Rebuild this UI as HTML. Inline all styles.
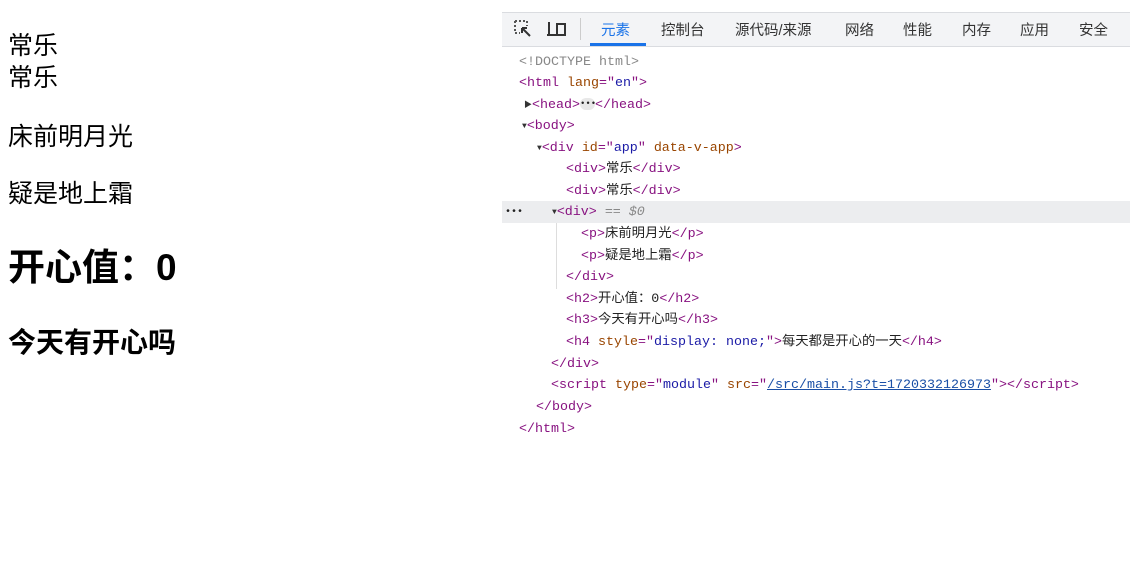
<!DOCTYPE html>
<html><head><meta charset="utf-8"><style>
body{margin:0;width:1130px;height:566px;background:#fff;position:relative;overflow:hidden;font-family:"Liberation Sans","Noto Sans CJK SC",sans-serif;}
.l{position:absolute;left:8px;color:#000;white-space:nowrap;line-height:1;}
#dev{position:absolute;left:502px;top:12px;width:628px;height:554px;}
#bar{position:absolute;left:0;top:0;width:628px;height:33px;background:#f3f4f6;border-top:1px solid #dadce0;border-bottom:1px solid #dadce0;}
.tab{position:absolute;top:6px;font-size:14.5px;color:#333;font-family:"Liberation Sans","Noto Sans CJK SC",sans-serif;}
.c{position:absolute;font-family:"Liberation Mono","Noto Sans CJK SC",monospace;font-size:13.33px;white-space:pre;line-height:16px;color:#222;}
.t{color:#881280}.a{color:#994500}.v{color:#1a1aa6}.g{color:#888}
.ar{font-size:8px;vertical-align:1px;color:#333}
</style></head><body>
<div class="l" style="top:34px;font-size:25px">常乐</div>
<div class="l" style="top:66px;font-size:25px">常乐</div>
<div class="l" style="top:125px;font-size:25px">床前明月光</div>
<div class="l" style="top:182px;font-size:25px">疑是地上霜</div>
<div class="l" style="top:249px;font-size:37px;font-weight:bold">开心值：0</div>
<div class="l" style="top:329px;font-size:28px;font-weight:bold">今天有开心吗</div>

<div id="dev">
<div id="bar">
 <svg style="position:absolute;left:11px;top:6px" width="20" height="20" viewBox="0 0 20 20"><path d="M2 2h12v5M2 2v12h5" fill="none" stroke="#555" stroke-width="2" stroke-dasharray="2 2"/><path d="M9 9l8 8M9 9h5M9 9v5" stroke="#333" stroke-width="2" fill="none"/></svg>
 <svg style="position:absolute;left:44px;top:6px" width="22" height="20" viewBox="0 0 22 20"><path d="M3 3v13h7M1 16h9" stroke="#333" stroke-width="2" fill="none"/><rect x="11" y="5" width="8" height="11" fill="none" stroke="#333" stroke-width="2"/></svg>
 <div style="position:absolute;left:78px;top:5px;width:1px;height:22px;background:#ccc"></div>
 <div class="tab" style="left:99px;color:#1a73e8">元素</div>
 <div style="position:absolute;left:88px;top:30px;width:56px;height:3px;background:#1a73e8"></div>
 <div class="tab" style="left:159px">控制台</div>
 <div class="tab" style="left:233px">源代码/来源</div>
 <div class="tab" style="left:343px">网络</div>
 <div class="tab" style="left:401px">性能</div>
 <div class="tab" style="left:460px">内存</div>
 <div class="tab" style="left:518px">应用</div>
 <div class="tab" style="left:577px">安全</div>
</div>
<div style="position:absolute;left:0;top:189px;width:628px;height:22px;background:#ecedef"></div>
<div style="position:absolute;left:54px;top:211px;width:1px;height:66px;background:#ddd"></div>
</div>

<div class="c g" style="left:519px;top:55px">&lt;!DOCTYPE html&gt;</div>
<div class="c" style="left:519px;top:76px"><span class="t">&lt;html</span> <span class="a">lang</span><span class="t">="</span><span class="v">en</span><span class="t">"&gt;</span></div>
<div class="c" style="left:524px;top:98px"><span class="ar">▶</span><span class="t">&lt;head&gt;</span><span style="display:inline-block;width:15px;height:12px;border-radius:6px;background:#e8e8e8;font-size:9px;line-height:12px;text-align:center;vertical-align:middle">•••</span><span class="t">&lt;/head&gt;</span></div>
<div class="c" style="left:522px;top:119px"><span class="ar">▼</span><span class="t">&lt;body&gt;</span></div>
<div class="c" style="left:537px;top:141px"><span class="ar">▼</span><span class="t">&lt;div</span> <span class="a">id</span><span class="t">="</span><span class="v">app</span><span class="t">"</span> <span class="a">data-v-app</span><span class="t">&gt;</span></div>
<div class="c" style="left:566px;top:162px"><span class="t">&lt;div&gt;</span>常乐<span class="t">&lt;/div&gt;</span></div>
<div class="c" style="left:566px;top:184px"><span class="t">&lt;div&gt;</span>常乐<span class="t">&lt;/div&gt;</span></div>
<div class="c" style="left:505px;top:205px;font-size:10px">•••</div>
<div class="c" style="left:552px;top:205px"><span class="ar">▼</span><span class="t">&lt;div&gt;</span> <i class="g">== $0</i></div>
<div class="c" style="left:581px;top:227px"><span class="t">&lt;p&gt;</span>床前明月光<span class="t">&lt;/p&gt;</span></div>
<div class="c" style="left:581px;top:249px"><span class="t">&lt;p&gt;</span>疑是地上霜<span class="t">&lt;/p&gt;</span></div>
<div class="c" style="left:566px;top:270px"><span class="t">&lt;/div&gt;</span></div>
<div class="c" style="left:566px;top:292px"><span class="t">&lt;h2&gt;</span>开心值：0<span class="t">&lt;/h2&gt;</span></div>
<div class="c" style="left:566px;top:313px"><span class="t">&lt;h3&gt;</span>今天有开心吗<span class="t">&lt;/h3&gt;</span></div>
<div class="c" style="left:566px;top:335px"><span class="t">&lt;h4</span> <span class="a">style</span><span class="t">="</span><span class="v">display: none;</span><span class="t">"&gt;</span>每天都是开心的一天<span class="t">&lt;/h4&gt;</span></div>
<div class="c" style="left:551px;top:357px"><span class="t">&lt;/div&gt;</span></div>
<div class="c" style="left:551px;top:378px"><span class="t">&lt;script</span> <span class="a">type</span><span class="t">="</span><span class="v">module</span><span class="t">"</span> <span class="a">src</span><span class="t">="</span><span class="v" style="text-decoration:underline;color:#1a4fa6">/src/main.js?t=1720332126973</span><span class="t">"&gt;&lt;/script&gt;</span></div>
<div class="c" style="left:536px;top:400px"><span class="t">&lt;/body&gt;</span></div>
<div class="c" style="left:519px;top:422px"><span class="t">&lt;/html&gt;</span></div>
</body></html>
